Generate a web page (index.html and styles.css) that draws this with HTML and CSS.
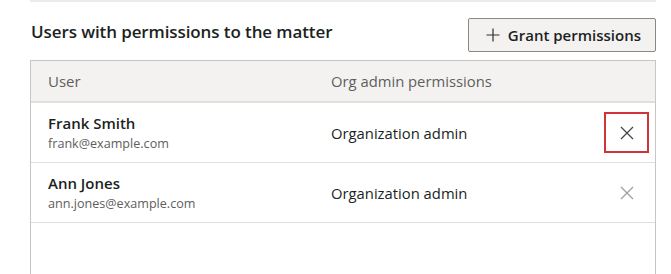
FILE: index.html
```html
<!DOCTYPE html>
<html>
<head>
<meta charset="utf-8">
<link rel="stylesheet" href="styles.css">
</head>
<body>
<div class="page">
  <div class="divider"></div>
  <div class="section-head">
    <h2 class="title">Users with permissions to the matter</h2>
    <button class="btn">
      <svg class="plus" width="14" height="14" viewBox="0 0 14 14"><path d="M7 0.5V13.5M0.5 7H13.5" stroke="#323130" stroke-width="1.2" fill="none"/></svg>
      <span>Grant permissions</span>
    </button>
  </div>
  <div class="table">
    <div class="row head">
      <div class="c1">User</div>
      <div class="c2">Org admin permissions</div>
      <div class="c3"></div>
    </div>
    <div class="row">
      <div class="c1"><div class="name">Frank Smith</div><div class="email">frank@example.com</div></div>
      <div class="c2">Organization admin</div>
      <div class="c3"><button class="remove focused"><svg width="14" height="14" viewBox="0 0 14 14"><path d="M1 1L13 13M13 1L1 13" stroke="currentColor" stroke-width="1.3" fill="none"/></svg></button></div>
    </div>
    <div class="row">
      <div class="c1"><div class="name">Ann Jones</div><div class="email">ann.jones@example.com</div></div>
      <div class="c2">Organization admin</div>
      <div class="c3"><button class="remove"><svg width="14" height="14" viewBox="0 0 14 14"><path d="M1 1L13 13M13 1L1 13" stroke="currentColor" stroke-width="1.3" fill="none"/></svg></button></div>
    </div>
  </div>
</div>
</body>
</html>
```
FILE: styles.css
```css
html, body { margin: 0; padding: 0; background: #fff; }
body { font-family: "Open Sans", "Noto Sans", sans-serif; color: #323130; }
.page { padding: 0 15px 0 30px; }
.divider { height: 2px; background: #ebebeb; margin-top: 0; }
.section-head { display: flex; justify-content: space-between; align-items: flex-start; margin-top: 16px; }
.title { margin: 2px 0 0 1px; font-size: 17px; font-weight: 600; color: #201f1e; letter-spacing: -0.1px; }
.btn { display: flex; align-items: center; gap: 8px; height: 34px; padding: 0 14px 0 17px; border: 1px solid #8a8886; border-radius: 2px; background: #f3f2f1; font-family: inherit; font-size: 15px; font-weight: 600; color: #201f1e; margin-right: 0; }
.table { margin-top: 8px; border: 1px solid #c8c6c4; border-bottom: none; height: 220px; }
.row { display: flex; align-items: center; border-bottom: 1px solid #e1dfdd; height: 59px; }
.row.head { height: 40px; background: #f3f2f1; border-bottom: 2px solid #e1dfdd; color: #605e5c; font-size: 15px; }
.c1 { width: 283px; padding-left: 17px; }
.c2 { flex: 1; font-size: 14.8px; color: #201f1e; }
.row.head .c2 { color: #605e5c; }
.c3 { width: 70px; display: flex; justify-content: flex-end; padding-right: 6px; }
.name { font-size: 15px; font-weight: 600; color: #201f1e; line-height: 20px; }
.email { font-size: 12.6px; color: #605e5c; line-height: 18px; margin-top: 2px; }
.remove { width: 45px; height: 41px; display: flex; align-items: center; justify-content: center; border: 2px solid transparent; background: transparent; color: #a19f9d; padding: 0; }
.remove.focused { border-color: #d13438; color: #484644; }
```
